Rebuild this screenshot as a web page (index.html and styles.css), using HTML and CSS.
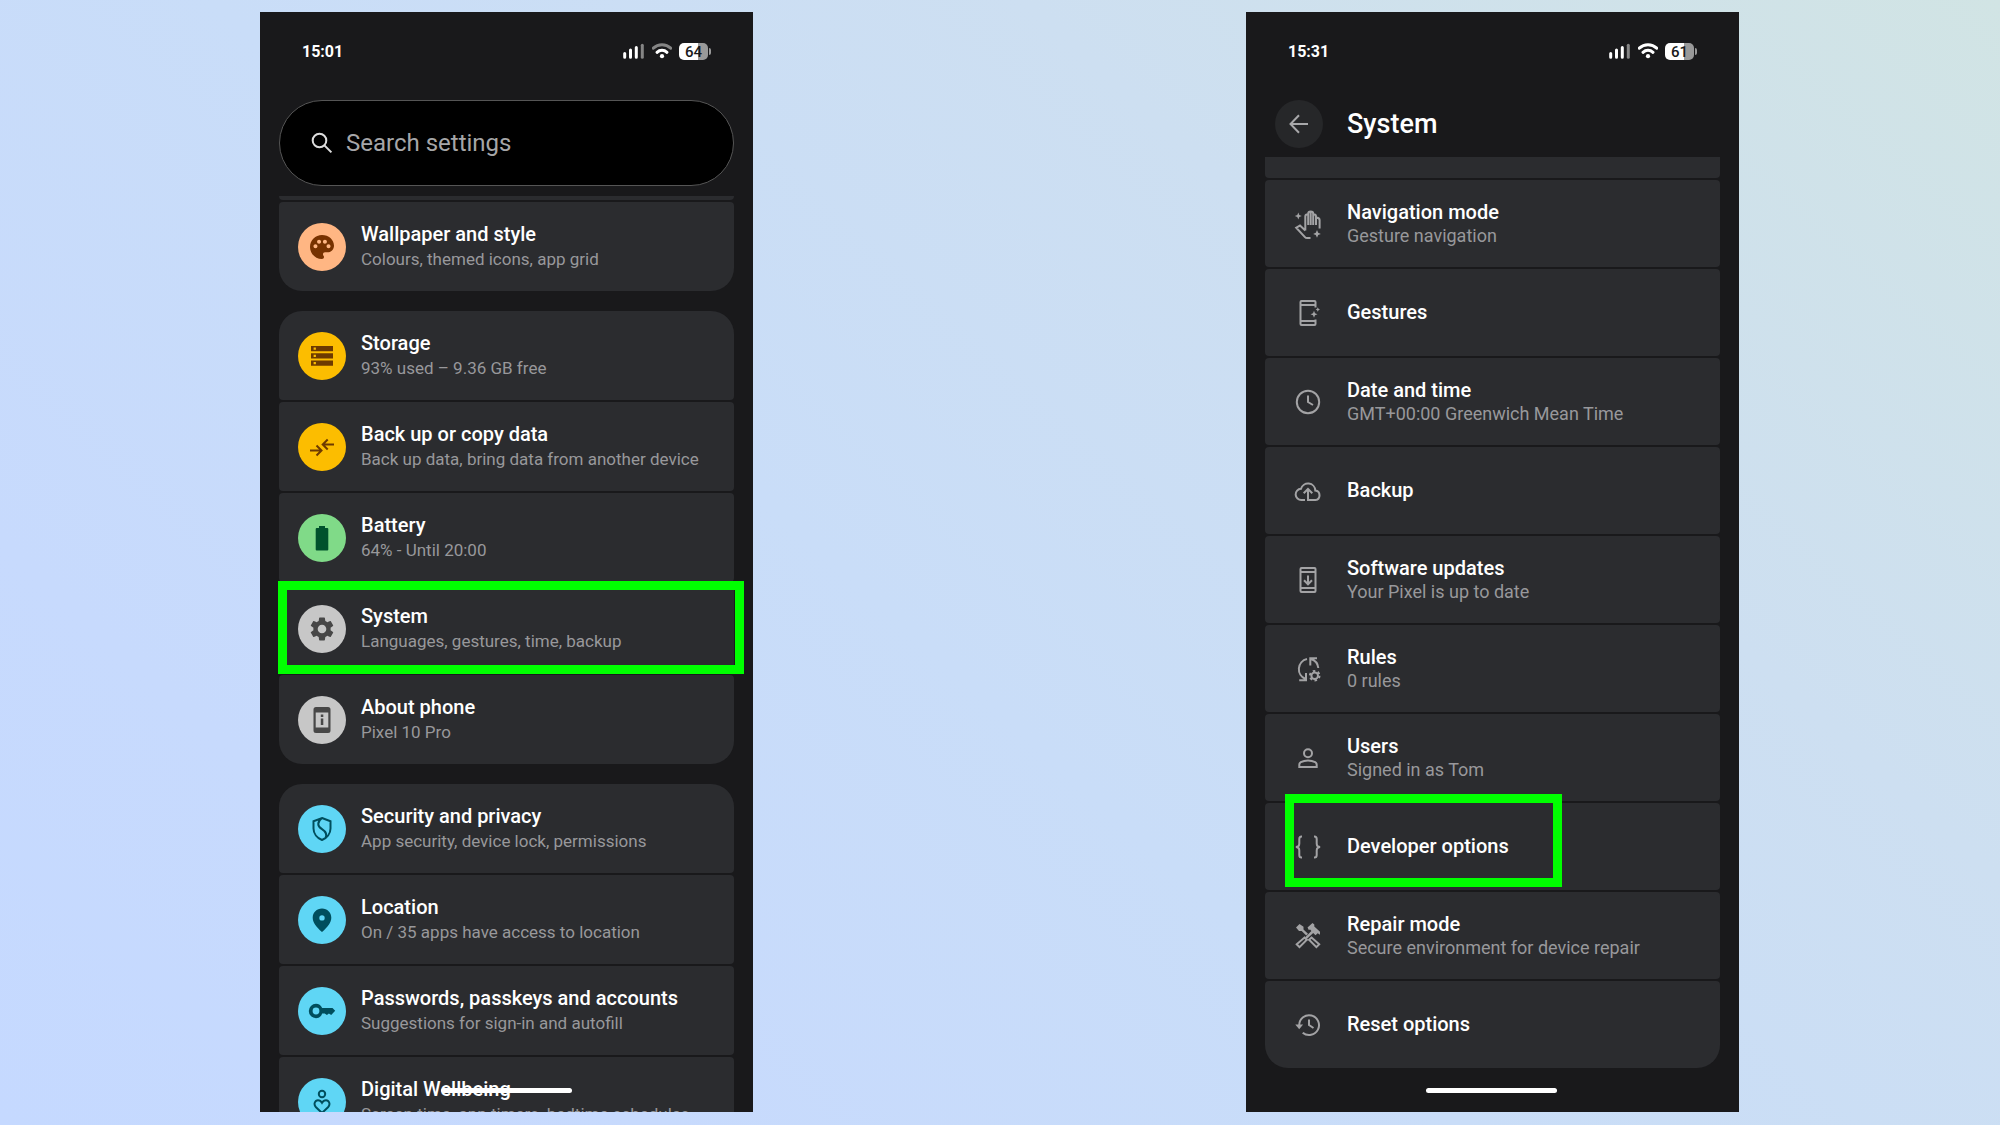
FILE: index.html
```
<!DOCTYPE html>
<html lang="en">
<head>
    <meta charset="UTF-8">
    <meta name="viewport" content="width=device-width, initial-scale=1.0">
    <title>Developer options on Pixel</title>
    <link rel="stylesheet" href="styles.css">
</head>
<body>
    <main class="phones">
        <section class="phone">
            <div class="status-bar">
                <span class="time">15:01</span>
                <div class="status-icons">
                    <svg class="signal" viewBox="0 0 22 16"><path d="M1.7 10.5v3.8M7.5 7v7.3M13.3 4.5v9.8"/><path class="dim" d="M19.3 2.2v12.1"/></svg>
                    <svg class="wifi" viewBox="0 0 20 16"><path class="dim" d="M1.3 5.2a12.5 12.5 0 0 1 17.4 0"/><path d="M5 9.3a7.3 7.3 0 0 1 10 0"/><circle cx="10" cy="13.2" r="2.1"/></svg>
                    <span class="battery">64</span>
                </div>
            </div>

            <label class="search">
                <svg viewBox="0 0 22 22"><circle cx="8.5" cy="8.5" r="6.8"/><path d="M13.4 13.4l7 7"/></svg>
                <input type="search" placeholder="Search settings" aria-label="Search settings">
            </label>

            <ul class="list">
                <li class="peek"></li>
                <li class="group-end">
                    <a href="#">
                        <span class="badge peach"><svg viewBox="3 3 18 18"><path d="M12 3c-4.97 0-9 4.03-9 9s4.03 9 9 9c.83 0 1.5-.67 1.5-1.5 0-.39-.15-.74-.39-1.01-.23-.26-.38-.61-.38-.99 0-.83.67-1.5 1.5-1.5H16c2.76 0 5-2.24 5-5 0-4.42-4.03-8-9-8zm-4.9 10c-.83 0-1.5-.67-1.5-1.5S6.27 10 7.1 10s1.5.67 1.5 1.5S7.93 13 7.1 13zm2.7-3.5c-.83 0-1.5-.67-1.5-1.5S8.97 6.5 9.8 6.5s1.5.67 1.5 1.5-.67 1.5-1.5 1.5zm4.4 0c-.83 0-1.5-.67-1.5-1.5s.67-1.5 1.5-1.5 1.5.67 1.5 1.5-.67 1.5-1.5 1.5zm2.7 3.5c-.83 0-1.5-.67-1.5-1.5s.67-1.5 1.5-1.5 1.5.67 1.5 1.5-.67 1.5-1.5 1.5z"/></svg></span>
                        <span class="text"><b>Wallpaper and style</b><small>Colours, themed icons, app grid</small></span>
                    </a>
                </li>

                <li class="group-start">
                    <a href="#">
                        <span class="badge yellow"><svg viewBox="0 0 24 24"><path fill-rule="evenodd" d="M1 2h22v5.3H1zM3.6 3.5v2.3h2.3V3.5zM1 9.3h22v5.3H1zM3.6 10.8v2.3h2.3v-2.3zM1 16.5h22v5.3H1zM3.6 18v2.3h2.3V18z"/></svg></span>
                        <span class="text"><b>Storage</b><small>93% used – 9.36 GB free</small></span>
                    </a>
                </li>
                <li>
                    <a href="#">
                        <span class="badge yellow line"><svg viewBox="0 0 24 24"><path d="M0 15.5h11.5M6.5 10.5l5 5-5 5M24 9.5H12.7M17.7 4.5l-5 5 5 5"/></svg></span>
                        <span class="text"><b>Back up or copy data</b><small>Back up data, bring data from another device</small></span>
                    </a>
                </li>
                <li>
                    <a href="#">
                        <span class="badge green"><svg viewBox="0 0 24 24"><path d="M9 0h6v2h2.3q1 0 1 1v20.5q0 1-1 1H6.7q-1 0-1-1V3q0-1 1-1H9z"/></svg></span>
                        <span class="text"><b>Battery</b><small>64% - Until 20:00</small></span>
                    </a>
                </li>
                <li class="marked">
                    <a href="#">
                        <span class="badge grey"><svg viewBox="2 2 20 20"><path d="M19.14 12.94c.04-.3.06-.61.06-.94 0-.32-.02-.64-.07-.94l2.03-1.58c.18-.14.23-.41.12-.61l-1.92-3.32c-.12-.22-.37-.29-.59-.22l-2.39.96c-.5-.38-1.03-.7-1.62-.94l-.36-2.54c-.04-.24-.24-.41-.48-.41h-3.84c-.24 0-.43.17-.47.41l-.36 2.54c-.59.24-1.13.57-1.62.94l-2.39-.96c-.22-.08-.47 0-.59.22L2.74 8.87c-.12.21-.08.47.12.61l2.03 1.58c-.05.3-.09.63-.09.94s.02.64.07.94l-2.03 1.58c-.18.14-.23.41-.12.61l1.92 3.32c.12.22.37.29.59.22l2.39-.96c.5.38 1.03.7 1.62.94l.36 2.54c.05.24.24.41.48.41h3.84c.24 0 .44-.17.47-.41l.36-2.54c.59-.24 1.13-.56 1.62-.94l2.39.96c.22.08.47 0 .59-.22l1.92-3.32c.12-.22.07-.47-.12-.61l-2.01-1.58zM12 15.6c-1.98 0-3.6-1.62-3.6-3.6s1.62-3.6 3.6-3.6 3.6 1.62 3.6 3.6-1.62 3.6-3.6 3.6z"/></svg></span>
                        <span class="text"><b>System</b><small>Languages, gestures, time, backup</small></span>
                    </a>
                </li>
                <li class="group-end">
                    <a href="#">
                        <span class="badge grey"><svg viewBox="0 0 24 24"><path fill-rule="evenodd" d="M6-1h12q2.500 0 2.500 2.500v21q0 2.500-2.500 2.500H6q-2.500 0-2.500-2.500v-21Q3.500-1 6-1zM5.700 4.500v15h12.600v-15zM10.800 6.500h2.500V9h-2.500zM10.800 10.500h2.500V17h-2.500z"/></svg></span>
                        <span class="text"><b>About phone</b><small>Pixel 10 Pro</small></span>
                    </a>
                </li>

                <li class="group-start">
                    <a href="#">
                        <span class="badge cyan line"><svg viewBox="0 0 24 24"><path d="M12 1l8.500 3.200v7.300c0 5-3.500 9.500-8.500 11.500-5-2-8.500-6.500-8.500-11.500V4.200zM12 1C7 5 7 9 12 12.200s5 6 3.500 9"/></svg></span>
                        <span class="text"><b>Security and privacy</b><small>App security, device lock, permissions</small></span>
                    </a>
                </li>
                <li>
                    <a href="#">
                        <span class="badge cyan"><svg viewBox="0 0 24 24"><path fill-rule="evenodd" d="M12 .5c5.300 0 9.300 4 9.300 9.200 0 4.700-3.500 9.300-9.300 14.300-5.800-5-9.300-9.600-9.300-14.300C2.700 4.500 6.700.5 12 .5zM12 7.200a2.700 2.700 0 1 0 0 5.400 2.700 2.700 0 0 0 0-5.400z"/></svg></span>
                        <span class="text"><b>Location</b><small>On / 35 apps have access to location</small></span>
                    </a>
                </li>
                <li>
                    <a href="#">
                        <span class="badge cyan"><svg viewBox="0 0 24 24"><path fill-rule="evenodd" d="M6 4.800c2.700 0 5 1.500 6.200 4.200h10.300l2.700 2.800-4 4.200-2.300-1.500-2 1.500-2.200-1.500h-2.500c-1 3-3.500 4.700-6.200 4.700a7.200 7.200 0 0 1 0-14.400zM6 8.600a3.400 3.400 0 1 0 0 6.800 3.400 3.400 0 0 0 0-6.800z"/></svg></span>
                        <span class="text"><b>Passwords, passkeys and accounts</b><small>Suggestions for sign-in and autofill</small></span>
                    </a>
                </li>
                <li>
                    <a href="#">
                        <span class="badge cyan line"><svg viewBox="0 0 24 24"><circle cx="12" cy="4" r="3.200"/><path d="M12 23l-6-5.800c-3-3.200-.8-7 2-7 2 0 3.200 1.200 4 2.600.8-1.400 2-2.600 4-2.600 2.800 0 5 3.800 2 7z"/></svg></span>
                        <span class="text"><b>Digital Wellbeing</b><small>Screen time, app timers, bedtime schedules</small></span>
                    </a>
                </li>
            </ul>
            <div class="home-bar"></div>
        </section>

        <section class="phone system">
            <div class="status-bar">
                <span class="time">15:31</span>
                <div class="status-icons">
                    <svg class="signal" viewBox="0 0 22 16"><path d="M1.7 10.5v3.8M7.5 7v7.3M13.3 4.5v9.8"/><path class="dim" d="M19.3 2.2v12.1"/></svg>
                    <svg class="wifi" viewBox="0 0 20 16"><path d="M1.3 5.2a12.5 12.5 0 0 1 17.4 0M5 9.3a7.3 7.3 0 0 1 10 0"/><circle cx="10" cy="13.2" r="2.1"/></svg>
                    <span class="battery">61</span>
                </div>
            </div>

            <header class="title-bar">
                <button type="button" aria-label="Back"><svg viewBox="0 0 20 20"><path d="M19 10H1.5M10 1.2L1.5 10l8.5 8.8"/></svg></button>
                <h1>System</h1>
            </header>

            <ul class="list">
                <li class="peek"></li>
                <li>
                    <a href="#">
                        <svg class="icon" viewBox="0 0 26 26"><path d="M10.300 19.500V5.500q0-2.300 2.900-2.300V14M13.200 4V2.800q0-2.300 2.500-2.300t2.500 2.300V14M15.700 1v13M18.200 3.200q2.800 0 2.800 2.300V14M21 6.500q3.600 0 3.600 2.500v8.500M10.300 19.500L5 14.500l-3.800 2.300 8.500 9q1 1.200 2.500 1.200H15.500"/><path class="solid" d="M3.300 1.500l1 2.500 2.500 1-2.500 1-1 2.500-1-2.500-2.500-1 2.500-1zM22 19l1.200 2.700 2.700 1.200-2.700 1.200L22 26.800l-1.200-2.700-2.700-1.200 2.700-1.200z"/></svg>
                        <span class="text"><b>Navigation mode</b><small>Gesture navigation</small></span>
                    </a>
                </li>
                <li>
                    <a href="#">
                        <svg class="icon" viewBox="0 0 26 26"><path d="M20.500 7.500V2q0-1-1-1H6.500q-1 0-1 1v22q0 1 1 1h13q1 0 1-1v-4.500M5.500 5h15M5.500 21h15"/><path class="solid" d="M19 10.800l1 2.500 2.500 1-2.500 1-1 2.500-1-2.500-2.500-1 2.500-1zM22.800 7.300l.7 1.500 1.500.7-1.500.7-.7 1.500-.7-1.500-1.500-.7 1.500-.7z"/></svg>
                        <span class="text"><b>Gestures</b></span>
                    </a>
                </li>
                <li>
                    <a href="#">
                        <svg class="icon" viewBox="0 0 26 26"><circle cx="13" cy="13" r="11.2"/><path d="M13 6.500V13l5 3"/></svg>
                        <span class="text"><b>Date and time</b><small>GMT+00:00 Greenwich Mean Time</small></span>
                    </a>
                </li>
                <li>
                    <a href="#">
                        <svg class="icon" viewBox="0 0 26 26"><path d="M10 22H6.500a5.600 5.600 0 0 1-.5-11.200 7.300 7.300 0 0 1 14.300 1.700A4.800 4.800 0 0 1 20.500 22H13V11M8.700 15.300L13 11l4.300 4.300"/></svg>
                        <span class="text"><b>Backup</b></span>
                    </a>
                </li>
                <li>
                    <a href="#">
                        <svg class="icon" viewBox="0 0 26 26"><path d="M6.500 1h13q1 0 1 1v22q0 1-1 1h-13q-1 0-1-1V2q0-1 1-1zM5.500 5h15M5.500 21h15M13 8.500V17M9 13.300l4 4 4-4"/></svg>
                        <span class="text"><b>Software updates</b><small>Your Pixel is up to date</small></span>
                    </a>
                </li>
                <li>
                    <a href="#">
                        <svg class="icon" viewBox="0 0 26 26"><path d="M12 3A10.500 10.500 0 0 0 10.500 23M4.200 24.200h6.800v-7.200M15.300 9.500V2.300H22M16 3a10.500 10.500 0 0 1 7.300 9"/><circle cx="19.700" cy="19.700" r="3.300"/><circle cx="19.700" cy="19.700" r="4.800" stroke-dasharray="2.500 2.530"/></svg>
                        <span class="text"><b>Rules</b><small>0 rules</small></span>
                    </a>
                </li>
                <li>
                    <a href="#">
                        <svg class="icon" viewBox="0 0 26 26"><circle cx="13" cy="8.300" r="4"/><path d="M4.300 22v-2.300q0-1.700 1.500-2.500Q9 15.500 13 15.500t7.200 1.700q1.500.8 1.500 2.500V22z"/></svg>
                        <span class="text"><b>Users</b><small>Signed in as Tom</small></span>
                    </a>
                </li>
                <li class="marked">
                    <a href="#">
                        <svg class="icon" viewBox="0 0 26 26"><path d="M7 2.500h-.5Q4.300 2.500 4.300 5v4.500Q4.300 13 .8 13q3.500 0 3.500 3.500V21q0 2.500 2.200 2.500H7M19 2.500h.5q2.200 0 2.200 2.500v4.500q0 3.500 3.500 3.500-3.500 0-3.500 3.500V21q0 2.500-2.200 2.500H19"/></svg>
                        <span class="text"><b>Developer options</b></span>
                    </a>
                </li>
                <li>
                    <a href="#">
                        <svg class="icon" viewBox="0 0 26 26"><path class="solid" d="M1 4.500L4.500 1l4 2.800v2.700l4.500 4.300-1.800 1.800-4.500-4.500H4zM12.500 4.500L17.500 0l1.800 1.500v2l5.700 5.300v3l-2.300-1.600-2.200 2-2.300-2.300-6.400 6-1.600-1.600 6.200-6.200-1.300-1.500-1.300.3z"/><path d="M9.500 14.500l2.300 2.300-7.300 7.300-2.800-2.800zM16.500 14.500l7.700 6.800-2.800 2.800-7.300-7.300z"/></svg>
                        <span class="text"><b>Repair mode</b><small>Secure environment for device repair</small></span>
                    </a>
                </li>
                <li class="group-end">
                    <a href="#">
                        <svg class="icon" viewBox="0 0 26 26"><path d="M4.200 13a9.900 9.900 0 1 1 3.500 7.700M14 7.500V13l4.500 3"/><path class="solid" d="M.3 12.500h7.800l-3.900 4.700z"/></svg>
                        <span class="text"><b>Reset options</b></span>
                    </a>
                </li>
            </ul>
            <div class="home-bar"></div>
        </section>
    </main>
</body>
</html>
```
FILE: styles.css
```
* {
    box-sizing: border-box;
}

body {
    margin: 0;
    font-family: Roboto, "Liberation Sans", sans-serif;
    color: #fff;
    background: linear-gradient(42deg, #c5d9ff 0%, #c7dafd 20%, #c9ddf8 45%, #cddff1 70%, #d1e4e4 100%);
}

.phones {
    display: grid;
    grid-template-columns: 1fr 1fr;
    grid-template-rows: minmax(0, 1fr);
    column-gap: 33.33%;
    height: 100vh;
    padding: 12px 13.05% 13px 13%;
}

.phone {
    position: relative;
    padding: 0 19px;
    overflow: hidden;
    background: #19191b;
}

/* status bar */
.status-bar {
    display: flex;
    align-items: center;
    justify-content: space-between;
    height: 78px;
    margin-bottom: 10px;
    padding: 0 23px;
}

.time {
    font-size: 16px;
    font-weight: 700;
}

.status-icons {
    display: flex;
    align-items: center;
    gap: 7px;
}

.signal,
.wifi {
    height: 16px;
    fill: none;
    stroke: #fff;
    stroke-width: 3;
    stroke-linecap: round;
}

.signal {
    width: 22px;
}

.wifi {
    width: 20px;
}

.wifi circle {
    fill: #fff;
    stroke: none;
}

.signal .dim,
.wifi .dim {
    stroke: #858585;
}

.battery {
    position: relative;
    width: 29px;
    height: 17px;
    margin-right: 3px;
    border-radius: 5px;
    background: linear-gradient(90deg, #fff 66%, #999 66%);
    color: #19191b;
    font-size: 15px;
    font-weight: 500;
    line-height: 18px;
    text-align: center;
}

.battery::after {
    content: "";
    position: absolute;
    top: 5px;
    right: -3px;
    width: 2px;
    height: 7px;
    border-radius: 0 2px 2px 0;
    background: #999;
}

/* search */
.search {
    display: flex;
    align-items: center;
    gap: 13px;
    height: 86px;
    margin-bottom: 10px;
    padding: 0 31px;
    border: 1px solid #555;
    border-radius: 43px;
    background: #000;
}

.search svg {
    width: 22px;
    height: 22px;
    fill: none;
    stroke: #ddd;
    stroke-width: 2;
}

.search input {
    flex: 1;
    min-width: 0;
    padding: 0;
    border: 0;
    outline: 0;
    background: none;
    color: #fff;
    font: 24px Roboto, "Liberation Sans", sans-serif;
}

.search input::placeholder {
    color: #a6a6a8;
}

/* title bar */
.title-bar {
    display: flex;
    align-items: center;
    gap: 24px;
    margin-bottom: 9px;
    padding-left: 10px;
}

.title-bar button {
    display: flex;
    align-items: center;
    justify-content: center;
    width: 48px;
    height: 48px;
    padding: 0;
    border: 0;
    border-radius: 50%;
    background: #262729;
}

.title-bar svg {
    width: 20px;
    height: 20px;
    fill: none;
    stroke: #a8a8aa;
    stroke-width: 2;
}

.title-bar h1 {
    margin: 0;
    font-size: 27px;
    font-weight: 500;
    line-height: 48px;
}

/* settings list */
.list {
    display: flex;
    flex-direction: column;
    gap: 2px;
    margin: 0;
    padding: 0;
    list-style: none;
}

.list li {
    position: relative;
    border-radius: 4px;
    background: #2b2c2f;
}

.list a {
    display: flex;
    align-items: center;
    gap: 15px;
    height: 89px;
    padding: 0 19px;
    color: #fff;
    text-decoration: none;
}

.list .peek {
    height: 4px;
    border-radius: 0 0 4px 4px;
}

.list .group-start {
    border-radius: 23px 23px 4px 4px;
}

.list .group-end {
    border-radius: 4px 4px 23px 23px;
}

.group-end + .group-start {
    margin-top: 18px;
}

.text {
    padding-bottom: 1px;
}

.text b,
.text small {
    display: block;
    white-space: nowrap;
}

.text b {
    font-size: 20px;
    font-weight: 500;
    line-height: 26px;
}

.text small {
    color: #98989b;
    font-size: 17px;
    line-height: 24px;
}

.badge {
    display: flex;
    flex-shrink: 0;
    align-items: center;
    justify-content: center;
    width: 48px;
    height: 48px;
    border-radius: 50%;
}

.badge svg {
    width: 24px;
    height: 24px;
    overflow: visible;
    fill: currentColor;
}

.badge.line svg {
    fill: none;
    stroke: currentColor;
    stroke-width: 2;
}

.peach {
    background: #ffb683;
    color: #773200;
}

.yellow {
    background: #fcbd00;
    color: #6d3a01;
}

.green {
    background: #80da88;
    color: #00522c;
}

.grey {
    background: #c7c7c7;
    color: #474747;
}

.cyan {
    background: #5fd6f5;
    color: #004e5d;
}

/* system screen rows */
.system .list a {
    gap: 26px;
    height: 87px;
    padding: 0 30px;
}

.system .peek {
    height: 21px;
}

.system small {
    font-size: 18px;
    line-height: 22px;
}

.icon {
    flex-shrink: 0;
    width: 26px;
    height: 26px;
    overflow: visible;
    fill: none;
    stroke: #a3a3a5;
    stroke-width: 2;
}

.icon .solid {
    fill: #a3a3a5;
    stroke: none;
}

/* green highlight boxes */
.marked::after {
    content: "";
    position: absolute;
    z-index: 1;
    top: -3px;
    right: -10px;
    bottom: -1px;
    left: -1px;
    border: 9px solid #0f0;
}

.system .marked::after {
    top: -9px;
    right: 158px;
    bottom: 3px;
    left: 20px;
}

.home-bar {
    position: absolute;
    z-index: 2;
    bottom: 19px;
    left: 50%;
    width: 131px;
    height: 5px;
    margin-left: -66px;
    border-radius: 3px;
    background: #fff;
}
```
